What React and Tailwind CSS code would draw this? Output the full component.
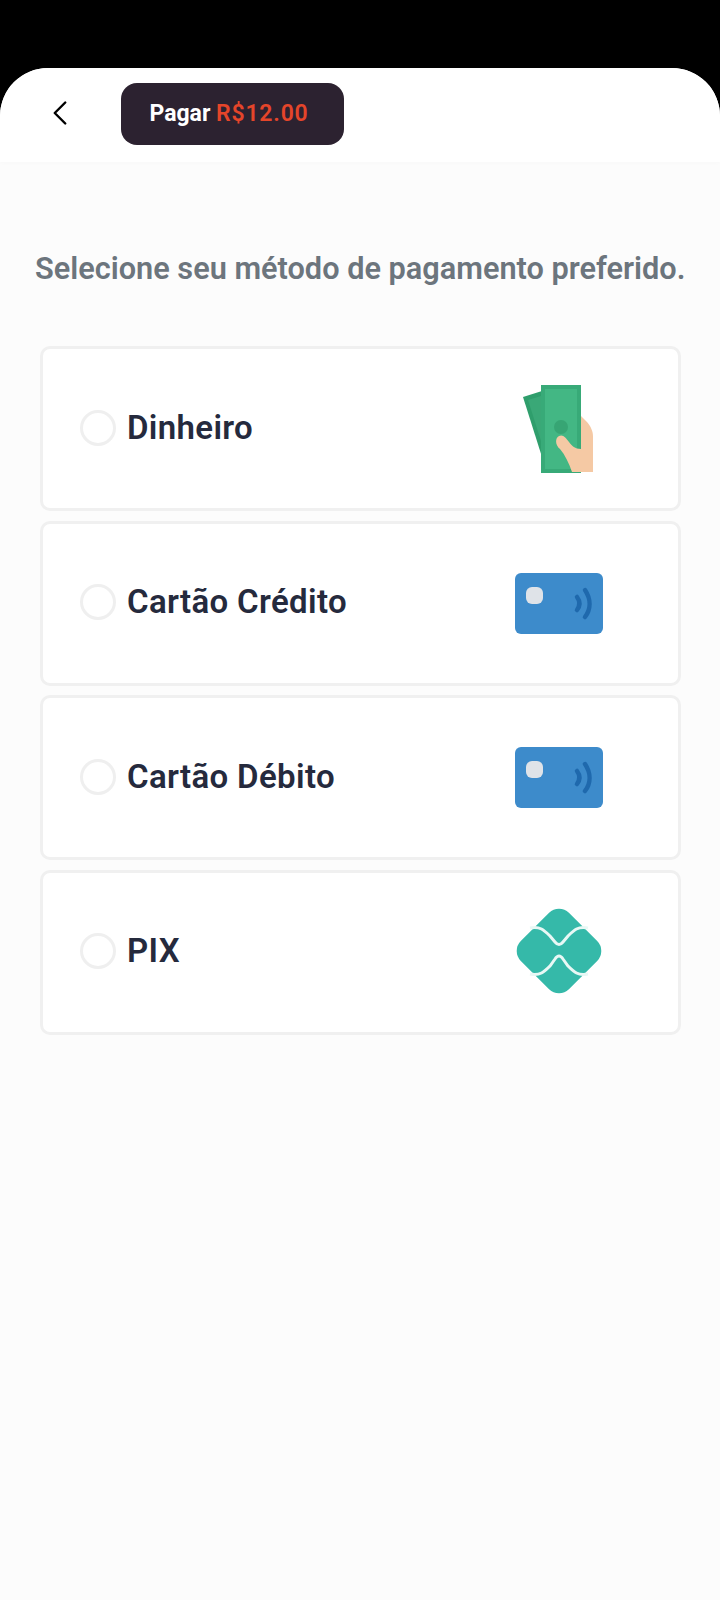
import React from "react";
import { ChevronLeft } from "lucide-react";

const CashIcon = () => (
  <svg width="76" height="90" viewBox="0 0 76 90">
    <path d="M2 14 L21 8 L21 74 Z" fill="#2f9e6c" />
    <path d="M7 17 L20 13 L20 58 Z" fill="#3aa877" />
    <rect x="20" y="2" width="40" height="88" fill="#38aa78" />
    <rect x="24" y="6" width="32" height="80" fill="#43b784" />
    <circle cx="40" cy="44" r="7" fill="#37a574" />
    <path d="M60 33 L66 39 C70 44 72 48 72 54 L72 89 L51 89 C48 80 44 72 39 66 C34 62 34 55 38 53 C42 51 45 55 48 59 C51 63 54 66 60 66 Z" fill="#f5c9a4" />
  </svg>
);

const CardIcon = () => (
  <svg className="mt-[3px]" width="88" height="62" viewBox="0 0 88 62">
    <rect x="0" y="0" width="88" height="61" rx="6" fill="#3d8bcb" />
    <rect x="11" y="14" width="17" height="17" rx="6" fill="#dfe3e8" />
    <path d="M62 24 C65 28 65 33 62 37" fill="none" stroke="#1f69ad" strokeWidth="4.5" strokeLinecap="round" />
    <path d="M70 17 C76 26 76 36 70 44" fill="none" stroke="#1f69ad" strokeWidth="4.5" strokeLinecap="round" />
  </svg>
);

const PixIcon = () => (
  <svg width="86" height="86" viewBox="0 0 86 86">
    <rect x="9" y="9" width="68" height="68" rx="14" transform="rotate(45 43 43)" fill="#35b9a9" />
    <path d="M14 20 C24 18 28 22 34 28 L39 34 Q43 39 47 34 L52 28 C58 22 62 18 72 20" fill="none" stroke="#e8f8f5" strokeWidth="3" />
    <path d="M14 66 C24 68 28 64 34 58 L39 51 Q43 45 47 51 L52 58 C58 64 62 68 72 66" fill="none" stroke="#e8f8f5" strokeWidth="3" />
  </svg>
);

const methods = [
  { label: "Dinheiro", icon: <CashIcon /> },
  { label: "Cartão Crédito", icon: <CardIcon /> },
  { label: "Cartão Débito", icon: <CardIcon /> },
  { label: "PIX", icon: <PixIcon /> },
];

export default function App() {
  return (
    <div className="h-[1600px] w-[720px] bg-black pt-[68px] font-['Roboto',sans-serif]">
      <div className="h-[1532px] overflow-hidden rounded-t-[48px] bg-[#fcfcfc]">
        <header className="flex h-[94px] items-start bg-white shadow-[0_1px_4px_rgba(0,0,0,0.02)]">
          <button className="mt-[24px] ml-[39px] text-black">
            <ChevronLeft className="h-[42px] w-[42px]" strokeWidth={1.4} />
          </button>
          <div className="mt-[15px] ml-[40px] flex h-[62px] w-[223px] items-center justify-center rounded-[16px] bg-[#2c2230] pt-[1px] pr-[7px] text-[23px] font-bold text-white">
            Pagar&nbsp;<span className="font-semibold tracking-[0.8px] text-[#e5452a]">R$12.00</span>
          </div>
        </header>

        <p className="mt-[89px] ml-[35px] text-[30.7px] leading-[36px] font-semibold whitespace-nowrap text-[#6c757d]">
          Selecione seu método de pagamento preferido.
        </p>

        <div className="mt-[59px] ml-[40px] flex w-[641px] flex-col gap-[9.5px]">
          {methods.map((method) => (
            <div
              key={method.label}
              className="flex h-[165px] items-center rounded-[10px] border-[3px] border-[#f0f0f0] bg-white pb-[2px] pl-[37px]"
            >
              <span className="h-[36px] w-[36px] shrink-0 rounded-full border-[3px] border-[#efefef]" />
              <span className="ml-[11px] text-[33px] font-semibold tracking-[0.35px] text-[#252a3d]">{method.label}</span>
              <span className="mr-[75px] ml-auto flex w-[88px] justify-center">{method.icon}</span>
            </div>
          ))}
        </div>
      </div>
    </div>
  );
}
